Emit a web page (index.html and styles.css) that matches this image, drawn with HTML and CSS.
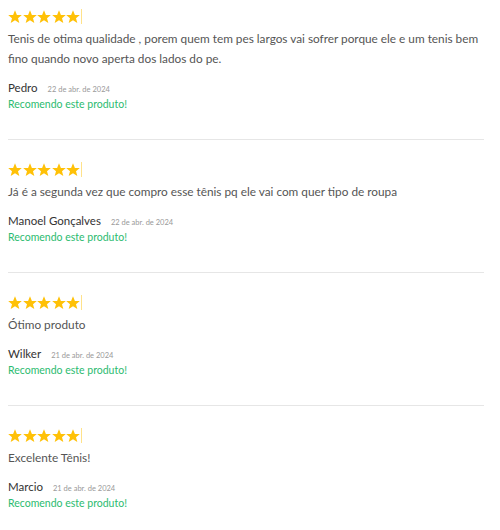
FILE: index.html
```html
<!DOCTYPE html>
<html lang="pt-BR">
<head>
<meta charset="utf-8">
<link rel="stylesheet" href="styles.css">
</head>
<body>
<div class="reviews">
  <div class="review">
    <div class="stars">
      <svg viewBox="0 0 14 14"><polygon points="7,0.3 8.9,4.9 13.8,5.1 10,8.2 11.3,13 7,10.3 2.7,13 4,8.2 0.2,5.1 5.1,4.9"/></svg>
      <svg viewBox="0 0 14 14"><polygon points="7,0.3 8.9,4.9 13.8,5.1 10,8.2 11.3,13 7,10.3 2.7,13 4,8.2 0.2,5.1 5.1,4.9"/></svg>
      <svg viewBox="0 0 14 14"><polygon points="7,0.3 8.9,4.9 13.8,5.1 10,8.2 11.3,13 7,10.3 2.7,13 4,8.2 0.2,5.1 5.1,4.9"/></svg>
      <svg viewBox="0 0 14 14"><polygon points="7,0.3 8.9,4.9 13.8,5.1 10,8.2 11.3,13 7,10.3 2.7,13 4,8.2 0.2,5.1 5.1,4.9"/></svg>
      <svg viewBox="0 0 14 14"><polygon points="7,0.3 8.9,4.9 13.8,5.1 10,8.2 11.3,13 7,10.3 2.7,13 4,8.2 0.2,5.1 5.1,4.9"/></svg>
      <span class="bar"></span>
    </div>
    <p class="text">Tenis de otima qualidade , porem quem tem pes largos vai sofrer porque ele e um tenis bem fino quando novo aperta dos lados do pe.</p>
    <div class="meta"><span class="name">Pedro</span><span class="date">22 de abr. de 2024</span></div>
    <div class="rec">Recomendo este produto!</div>
  </div>
  <div class="review">
    <div class="stars">
      <svg viewBox="0 0 14 14"><polygon points="7,0.3 8.9,4.9 13.8,5.1 10,8.2 11.3,13 7,10.3 2.7,13 4,8.2 0.2,5.1 5.1,4.9"/></svg>
      <svg viewBox="0 0 14 14"><polygon points="7,0.3 8.9,4.9 13.8,5.1 10,8.2 11.3,13 7,10.3 2.7,13 4,8.2 0.2,5.1 5.1,4.9"/></svg>
      <svg viewBox="0 0 14 14"><polygon points="7,0.3 8.9,4.9 13.8,5.1 10,8.2 11.3,13 7,10.3 2.7,13 4,8.2 0.2,5.1 5.1,4.9"/></svg>
      <svg viewBox="0 0 14 14"><polygon points="7,0.3 8.9,4.9 13.8,5.1 10,8.2 11.3,13 7,10.3 2.7,13 4,8.2 0.2,5.1 5.1,4.9"/></svg>
      <svg viewBox="0 0 14 14"><polygon points="7,0.3 8.9,4.9 13.8,5.1 10,8.2 11.3,13 7,10.3 2.7,13 4,8.2 0.2,5.1 5.1,4.9"/></svg>
      <span class="bar"></span>
    </div>
    <p class="text">Já é a segunda vez que compro esse tênis pq ele vai com quer tipo de roupa</p>
    <div class="meta"><span class="name">Manoel Gonçalves</span><span class="date">22 de abr. de 2024</span></div>
    <div class="rec">Recomendo este produto!</div>
  </div>
  <div class="review">
    <div class="stars">
      <svg viewBox="0 0 14 14"><polygon points="7,0.3 8.9,4.9 13.8,5.1 10,8.2 11.3,13 7,10.3 2.7,13 4,8.2 0.2,5.1 5.1,4.9"/></svg>
      <svg viewBox="0 0 14 14"><polygon points="7,0.3 8.9,4.9 13.8,5.1 10,8.2 11.3,13 7,10.3 2.7,13 4,8.2 0.2,5.1 5.1,4.9"/></svg>
      <svg viewBox="0 0 14 14"><polygon points="7,0.3 8.9,4.9 13.8,5.1 10,8.2 11.3,13 7,10.3 2.7,13 4,8.2 0.2,5.1 5.1,4.9"/></svg>
      <svg viewBox="0 0 14 14"><polygon points="7,0.3 8.9,4.9 13.8,5.1 10,8.2 11.3,13 7,10.3 2.7,13 4,8.2 0.2,5.1 5.1,4.9"/></svg>
      <svg viewBox="0 0 14 14"><polygon points="7,0.3 8.9,4.9 13.8,5.1 10,8.2 11.3,13 7,10.3 2.7,13 4,8.2 0.2,5.1 5.1,4.9"/></svg>
      <span class="bar"></span>
    </div>
    <p class="text">Ótimo produto</p>
    <div class="meta"><span class="name">Wilker</span><span class="date">21 de abr. de 2024</span></div>
    <div class="rec">Recomendo este produto!</div>
  </div>
  <div class="review">
    <div class="stars">
      <svg viewBox="0 0 14 14"><polygon points="7,0.3 8.9,4.9 13.8,5.1 10,8.2 11.3,13 7,10.3 2.7,13 4,8.2 0.2,5.1 5.1,4.9"/></svg>
      <svg viewBox="0 0 14 14"><polygon points="7,0.3 8.9,4.9 13.8,5.1 10,8.2 11.3,13 7,10.3 2.7,13 4,8.2 0.2,5.1 5.1,4.9"/></svg>
      <svg viewBox="0 0 14 14"><polygon points="7,0.3 8.9,4.9 13.8,5.1 10,8.2 11.3,13 7,10.3 2.7,13 4,8.2 0.2,5.1 5.1,4.9"/></svg>
      <svg viewBox="0 0 14 14"><polygon points="7,0.3 8.9,4.9 13.8,5.1 10,8.2 11.3,13 7,10.3 2.7,13 4,8.2 0.2,5.1 5.1,4.9"/></svg>
      <svg viewBox="0 0 14 14"><polygon points="7,0.3 8.9,4.9 13.8,5.1 10,8.2 11.3,13 7,10.3 2.7,13 4,8.2 0.2,5.1 5.1,4.9"/></svg>
      <span class="bar"></span>
    </div>
    <p class="text">Excelente Tênis!</p>
    <div class="meta"><span class="name">Marcio</span><span class="date">21 de abr. de 2024</span></div>
    <div class="rec">Recomendo este produto!</div>
  </div>
</div>
</body>
</html>
```

FILE: styles.css
```css
html, body {
  margin: 0;
  background: #fff;
}
body {
  padding: 0 16px 0 8px;
  font-family: Lato, "Open Sans", sans-serif;
  color: #555;
}
.review {
  padding-top: 10px;
  padding-bottom: 27px;
  border-bottom: 1px solid #e6e6e6;
}
.review + .review {
  padding-top: 23px;
}
.review:last-child {
  border-bottom: none;
}
.stars {
  display: flex;
  align-items: flex-start;
  height: 14px;
  gap: 0.6px;
}
.stars svg {
  width: 14px;
  height: 14px;
  fill: #ffc107;
  display: block;
}
.stars .bar {
  width: 1px;
  height: 15px;
  background: #ffe28a;
  margin-top: -1px;
}
.text {
  margin: 5px 0 0;
  font-size: 11.8px;
  line-height: 20px;
  color: #555;
}
.meta {
  margin-top: 10px;
  display: flex;
  align-items: baseline;
  gap: 10px;
  line-height: 18px;
  height: 18px;
}
.name {
  font-size: 11.5px;
  color: #333;
}
.date {
  font-size: 7.5px;
  line-height: 9px;
  color: #999;
}
.rec {
  font-size: 10.5px;
  line-height: 15px;
  color: #2bbb6f;
}
```
